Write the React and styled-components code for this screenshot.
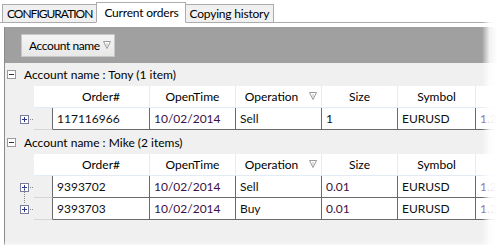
import React from "react";
import styled, { createGlobalStyle } from "styled-components";

const Global = createGlobalStyle`
  html, body { margin: 0; padding: 0; background: #fff; }
  body { font-family: Lato, "Noto Sans", sans-serif; font-size: 12px; color: #1e1e1e; }
`;

const Page = styled.div`
  position: relative;
  width: 497px;
  height: 249px;
  overflow: hidden;
  background: #fff;
`;

const TabStrip = styled.div`
  display: flex;
  align-items: flex-end;
  height: 22px;
  padding-left: 2px;
  border-bottom: 1px solid #acacac;
`;

const Tab = styled.div`
  box-sizing: border-box;
  height: ${(p) => (p.$active ? "21px" : "18px")};
  margin-bottom: ${(p) => (p.$active ? "-1px" : "0")};
  padding: ${(p) => (p.$active ? "2px 6px 0 7px" : "1px 4px 0")};
  border: 1px solid #acacac;
  border-bottom: ${(p) => (p.$active ? "1px solid #fff" : "none")};
  background: ${(p) => (p.$active ? "#fff" : "#f0f0f0")};
  line-height: 15px;
  white-space: nowrap;
  letter-spacing: ${(p) => (p.$caps ? "-1px" : "-0.2px")};
  color: #000;
  & + & { margin-left: -1px; }
`;

const Body = styled.div`
  margin: 4px 0 0 4px;
  border-left: 1px solid #8a8a8a;
  height: 218px;
  display: flex;
  flex-direction: column;
`;

const GroupPanel = styled.div`
  height: 36px;
  background: #a0a0a0;
  display: flex;
  align-items: center;
  padding-left: 16px;
  flex-shrink: 0;
`;

const GroupButton = styled.div`
  box-sizing: border-box;
  height: 23px;
  width: 94px;
  display: flex;
  align-items: center;
  justify-content: space-between;
  padding: 0 3px 0 7px;
  white-space: nowrap;
  letter-spacing: -0.4px;
  background: linear-gradient(#f4f4f4, #e8e8e8);
  border: 1px solid #c8c8c8;
  color: #000;
`;

const Groups = styled.div`
  flex: 1;
  background: #f0f0f0;
`;

const GroupHeader = styled.div`
  height: ${(p) => p.$h}px;
  display: flex;
  align-items: center;
  padding-left: 2px;
  gap: 8px;
  color: #000;
  white-space: nowrap;
`;

const ToggleBox = styled.span`
  box-sizing: border-box;
  width: 9px;
  height: 9px;
  border: 1px solid ${(p) => (p.$dark ? "#7a7a9a" : "#9a9a9a")};
  background: #fff;
  position: relative;
  flex-shrink: 0;
  &::before {
    content: "";
    position: absolute;
    left: 1px;
    top: 3px;
    width: 5px;
    height: 1px;
    background: ${(p) => (p.$dark ? "#2a3a8a" : "#333")};
  }
  &::after {
    content: "";
    display: ${(p) => (p.$plus ? "block" : "none")};
    position: absolute;
    left: 3px;
    top: 1px;
    width: 1px;
    height: 5px;
    background: #2a3a8a;
  }
`;

const Table = styled.div`
  display: flex;
  flex-direction: column;
`;

const Row = styled.div`
  display: flex;
  height: 22px;
`;

const TreeCell = styled.div`
  width: 29px;
  flex-shrink: 0;
  position: relative;
  display: flex;
  align-items: center;
  padding-left: 15px;
  box-sizing: border-box;
`;

const Dots = styled.span`
  width: 4px;
  height: 1px;
  margin-left: 1px;
  background: repeating-linear-gradient(90deg, #8a8a8a 0 1px, transparent 1px 2px);
`;

const VDots = styled.span`
  position: absolute;
  left: 19px;
  top: ${(p) => p.$top}px;
  width: 1px;
  height: ${(p) => p.$h}px;
  background: repeating-linear-gradient(180deg, #8a8a8a 0 1px, transparent 1px 2px);
`;

const Indicator = styled.div`
  width: 19px;
  flex-shrink: 0;
  box-sizing: border-box;
  background: ${(p) => (p.$header ? "#fff" : "#f0f0f0")};
  border-right: ${(p) => (p.$header ? "none" : "1px solid #6a6a6a")};
  border-bottom: ${(p) => (p.$header ? "1px solid #e3ebf5" : "1px solid #d6d6d6")};
`;

const HeadCell = styled.div`
  width: ${(p) => p.$w}px;
  flex-shrink: 0;
  box-sizing: border-box;
  background: #fff;
  border-right: 1px solid #e3ebf5;
  border-bottom: 1px solid #e3ebf5;
  display: flex;
  align-items: center;
  justify-content: center;
  position: relative;
  padding-right: ${(p) => (p.$filter ? "14px" : "0")};
  color: #000;
`;

const FilterSlot = styled.span`
  position: absolute;
  right: 4px;
  top: 6px;
  display: flex;
`;

const Cell = styled.div`
  width: ${(p) => p.$w}px;
  flex-shrink: 0;
  box-sizing: border-box;
  background: #fff;
  border-right: 1px solid #6a6a6a;
  border-bottom: 1px solid #6a6a6a;
  display: flex;
  align-items: center;
  padding-left: 4px;
  white-space: nowrap;
  overflow: hidden;
  color: ${(p) => p.$color || "#101010"};
`;

const FadeRight = styled.div`
  position: absolute;
  top: 0;
  right: 0;
  width: 15px;
  height: 100%;
  background: linear-gradient(90deg, rgba(255,255,255,0), rgba(255,255,255,0.85) 50%, #fff);
  pointer-events: none;
`;

const FadeBottom = styled.div`
  position: absolute;
  left: 0;
  bottom: 0;
  width: 100%;
  height: 8px;
  background: linear-gradient(180deg, rgba(255,255,255,0), #fff);
  pointer-events: none;
`;

const Filter = () => (
  <svg width="8" height="8" viewBox="0 0 8 8">
    <path d="M0.5 0.5 H7.5 L4 7.5 Z" fill="#fff" stroke="#9a9a9a" strokeWidth="1" />
    <path d="M4 2 V5" stroke="#c0c0c0" strokeWidth="1" />
  </svg>
);

const cols = [
  { key: "order", title: "Order#", w: 97 },
  { key: "time", title: "OpenTime", w: 86 },
  { key: "op", title: "Operation", w: 86, filter: true },
  { key: "size", title: "Size", w: 76 },
  { key: "sym", title: "Symbol", w: 78 },
  { key: "price", title: "", w: 60 },
];

const DATE = "#3a1046";
const groups = [
  {
    title: "Account name : Tony (1 item)",
    h: 23,
    rows: [{ order: "117116966", time: "10/02/2014", op: "Sell", size: "1", sym: "EURUSD", price: "1.2" }],
  },
  {
    title: "Account name : Mike (2 items)",
    h: 24,
    rows: [
      { order: "9393702", time: "10/02/2014", op: "Sell", size: "0.01", sym: "EURUSD", price: "1.2" },
      { order: "9393703", time: "10/02/2014", op: "Buy", size: "0.01", sym: "EURUSD", price: "1.2" },
    ],
  },
];

const colorFor = (key, v) => {
  if (key === "time") return DATE;
  if (key === "size" && v !== "1") return DATE;
  if (key === "price") return "#7a5aa0";
  return undefined;
};

export default function App() {
  return (
    <Page>
      <Global />
      <TabStrip>
        <Tab $caps>CONFIGURATION</Tab>
        <Tab $active>Current orders</Tab>
        <Tab>Copying history</Tab>
      </TabStrip>
      <Body>
        <GroupPanel>
          <GroupButton>
            Account name
            <Filter />
          </GroupButton>
        </GroupPanel>
        <Groups>
          {groups.map((g) => (
            <div key={g.title}>
              <GroupHeader $h={g.h}>
                <ToggleBox />
                {g.title}
              </GroupHeader>
              <Table>
                <Row>
                  <TreeCell />
                  <Indicator $header />
                  {cols.map((c) => (
                    <HeadCell key={c.key} $w={c.w} $filter={c.filter}>
                      {c.title}
                      {c.filter && (
                        <FilterSlot>
                          <Filter />
                        </FilterSlot>
                      )}
                    </HeadCell>
                  ))}
                </Row>
                {g.rows.map((r, i) => (
                  <Row key={r.order}>
                    <TreeCell>
                      <ToggleBox $plus $dark />
                      <Dots />
                      {i > 0 && <VDots $top={-10} $h={16} />}
                    </TreeCell>
                    <Indicator />
                    {cols.map((c) => (
                      <Cell key={c.key} $w={c.w} $color={colorFor(c.key, r[c.key])}>
                        {r[c.key]}
                      </Cell>
                    ))}
                  </Row>
                ))}
              </Table>
            </div>
          ))}
        </Groups>
      </Body>
      <FadeRight />
      <FadeBottom />
    </Page>
  );
}
